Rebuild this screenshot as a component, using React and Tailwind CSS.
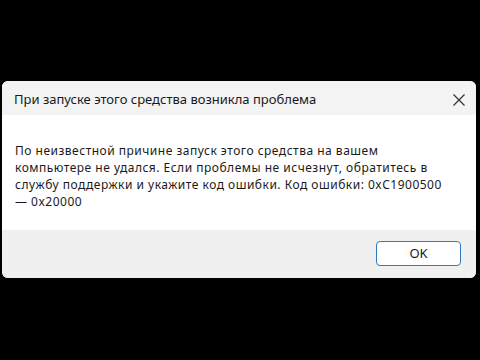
export default function App() {
  return (
    <div className="w-[480px] h-[360px] bg-black pt-[81px] pl-[2px]" style={{ fontFamily: '"Noto Sans", "Open Sans", sans-serif' }}>
      <div className="w-[474px] h-[197px] rounded-[6px] overflow-hidden flex flex-col bg-white">
        <div className="h-[34px] bg-[#f3f3f3] flex items-center justify-between pl-[12px] pr-[10px]">
          <span className="text-[13px] text-[#1a1a1a] pt-[4px]">При запуске этого средства возникла проблема</span>
          <svg width="14" height="14" viewBox="0 0 14 14" className="mt-[3px]">
            <path d="M1.5 1.5 L12.5 12.5 M12.5 1.5 L1.5 12.5" stroke="#333" strokeWidth="1.2" />
          </svg>
        </div>
        <div className="h-[115px] bg-white pl-[13px] pt-[27px] pr-[10px]">
          <p className="text-[12px] leading-[17px] tracking-[0.5px] text-[#1a1a1a] whitespace-nowrap">
            По неизвестной причине запуск этого средства на вашем<br />
            компьютере не удался. Если проблемы не исчезнут, обратитесь в<br />
            службу поддержки и укажите код ошибки. Код ошибки: 0xC1900500<br />
            — 0x20000
          </p>
        </div>
        <div className="flex-1 bg-[#f0f0f0] flex items-center justify-end pr-[15px] pb-[1px]">
          <button className="w-[85px] h-[25px] rounded-[4px] border border-[#2f78c4] bg-white text-[13px] text-[#1a1a1a]">OK</button>
        </div>
      </div>
    </div>
  );
}
